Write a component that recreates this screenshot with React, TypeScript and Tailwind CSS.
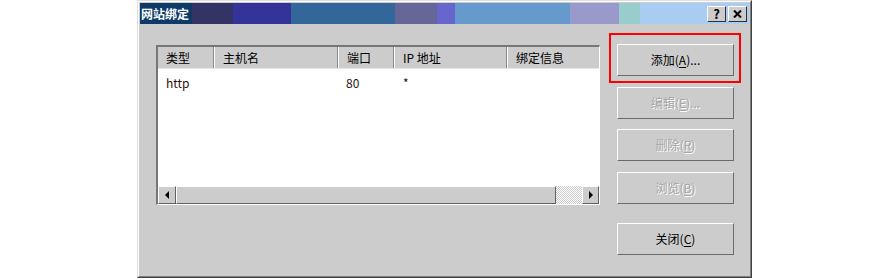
import React from 'react';

// Classic Win-style "网站绑定" (site bindings) dialog
const FONT = { fontFamily: '"Noto Sans CJK SC", "DejaVu Sans", sans-serif' };

const TITLE_BANDS = [
  { w: 'w-[41px]', bg: 'bg-[#333366]' },
  { w: 'w-[58px]', bg: 'bg-[#333399]' },
  { w: 'w-[104px]', bg: 'bg-[#336699]' },
  { w: 'w-[42px]', bg: 'bg-[#666699]' },
  { w: 'w-[18px]', bg: 'bg-[#6666cc]' },
  { w: 'w-[115px]', bg: 'bg-[#6699cc]' },
  { w: 'w-[49px]', bg: 'bg-[#9999cc]' },
  { w: 'w-[21px]', bg: 'bg-[#99cccc]' },
];

const COLUMNS = [
  { label: '类型', w: 'w-[56px]' },
  { label: '主机名', w: 'w-[124px]' },
  { label: '端口', w: 'w-[56px]' },
  { label: 'IP 地址', w: 'w-[113px]' },
  { label: '绑定信息', w: 'flex-1' },
];

const TitleButton: React.FC<{ children: React.ReactNode }> = ({ children }) => (
  <div className="w-[19px] h-[16px] bg-[#cccccc] border-t border-l border-t-white border-l-white border-r border-b border-r-[#303030] border-b-[#303030] flex items-center justify-center text-[13px] font-bold leading-none text-black">
    {children}
  </div>
);

const DlgButton: React.FC<{ label: string; hotkey: string; dots?: boolean; disabled?: boolean; className?: string }> = ({
  label,
  hotkey,
  dots,
  disabled,
  className = '',
}) => (
  <div
    className={`h-[32px] w-full bg-[#cccccc] border-t border-l border-t-white border-l-white border-r border-b border-r-[#6a6a6a] border-b-[#6a6a6a] flex items-center justify-center text-[12px] ${
      disabled ? 'text-[#a6a6a6] [text-shadow:1px_1px_0_#ffffff]' : 'text-black'
    } ${className}`}
  >
    <span>
      {label}(<span className="underline underline-offset-2">{hotkey}</span>){dots ? '...' : ''}
    </span>
  </div>
);

export default function App() {
  return (
    <div className="w-[893px] h-[280px] bg-white overflow-hidden" style={FONT}>
      <div className="ml-[137px] w-[615px] h-[278px] border-t border-l border-t-[#dfdfdf] border-l-[#dfdfdf] border-r border-b border-r-[#404040] border-b-[#404040]">
        <div className="w-full h-full border-t border-l border-t-white border-l-white border-r border-b border-r-[#808080] border-b-[#808080] bg-[#cccccc] p-px flex flex-col">
          {/* title bar */}
          <div className="h-[21px] flex shrink-0">
            <div className="w-[52px] bg-[#0e3a6a] text-white text-[12px] font-bold flex items-center pl-px">网站绑定</div>
            {TITLE_BANDS.map((b, i) => (
              <div key={i} className={`${b.w} ${b.bg}`} />
            ))}
            <div className="flex-1 bg-[#a9cdf2] flex items-center justify-end gap-[2px] pr-[2px]">
              <TitleButton>?</TitleButton>
              <TitleButton>
                <svg width="9" height="8" viewBox="0 0 9 8">
                  <path d="M1 0.5 L8 7.5 M8 0.5 L1 7.5" stroke="#000" strokeWidth="2" />
                </svg>
              </TitleButton>
            </div>
          </div>

          {/* body */}
          <div className="flex pl-[16px] relative">
            {/* list view */}
            <div className="mt-[21px] w-[444px] h-[160px] border-t-2 border-l-2 border-t-[#777777] border-l-[#777777] border-r border-b border-r-white border-b-white flex flex-col">
              <div className="h-[22px] flex bg-[#cccccc] border-b border-b-[#e6e6e6] text-[12px] text-black">
                {COLUMNS.map((c, i) => (
                  <div
                    key={c.label}
                    className={`${c.w} flex items-center pl-[8px] ${i < COLUMNS.length - 1 ? 'border-r border-r-[#8a8a8a]' : ''} ${
                      i > 0 ? 'border-l border-l-white' : ''
                    }`}
                  >
                    {c.label}
                  </div>
                ))}
              </div>
              <div className="flex-1 bg-white text-[12px] text-[#2a1010]">
                <div className="flex h-[27px] items-center">
                  <div className="w-[56px] pl-[8px]">http</div>
                  <div className="w-[125px]" />
                  <div className="w-[57px] pl-[7px]">80</div>
                  <div className="w-[113px] pl-[7px]">*</div>
                </div>
              </div>
              {/* horizontal scrollbar */}
              <div className="h-[18px] flex bg-[#cccccc]">
                <div className="w-[18px] border-t border-l border-t-white border-l-white border-r border-b border-r-[#606060] border-b-[#606060] flex items-center justify-center">
                  <svg width="5" height="8" viewBox="0 0 5 8">
                    <path d="M4 0 L0 4 L4 8 Z" fill="#000" />
                  </svg>
                </div>
                <div className="w-[380px] border-t border-l border-t-white border-l-white border-r border-b border-r-[#606060] border-b-[#606060]" />
                <div className="flex-1 bg-[repeating-conic-gradient(#ffffff_0_25%,#cccccc_0_50%)] bg-[length:2px_2px]" />
                <div className="w-[17px] border-t border-l border-t-white border-l-white border-r border-b border-r-[#606060] border-b-[#606060] flex items-center justify-center">
                  <svg width="5" height="8" viewBox="0 0 5 8">
                    <path d="M1 0 L5 4 L1 8 Z" fill="#000" />
                  </svg>
                </div>
              </div>
            </div>

            {/* buttons */}
            <div className="ml-[17px] w-[117px] flex flex-col pt-[20px]">
              <DlgButton label="添加" hotkey="A" dots />
              <DlgButton label="编辑" hotkey="E" dots disabled className="mt-[11px]" />
              <DlgButton label="删除" hotkey="R" disabled className="mt-[10px]" />
              <DlgButton label="浏览" hotkey="B" disabled className="mt-[11px]" />
              <DlgButton label="关闭" hotkey="C" className="mt-[19px]" />
            </div>

            {/* red highlight annotation */}
            <div className="absolute left-[469px] top-[9px] w-[132px] h-[50px] border-2 border-[#ff0000]" />
          </div>
        </div>
      </div>
    </div>
  );
}
